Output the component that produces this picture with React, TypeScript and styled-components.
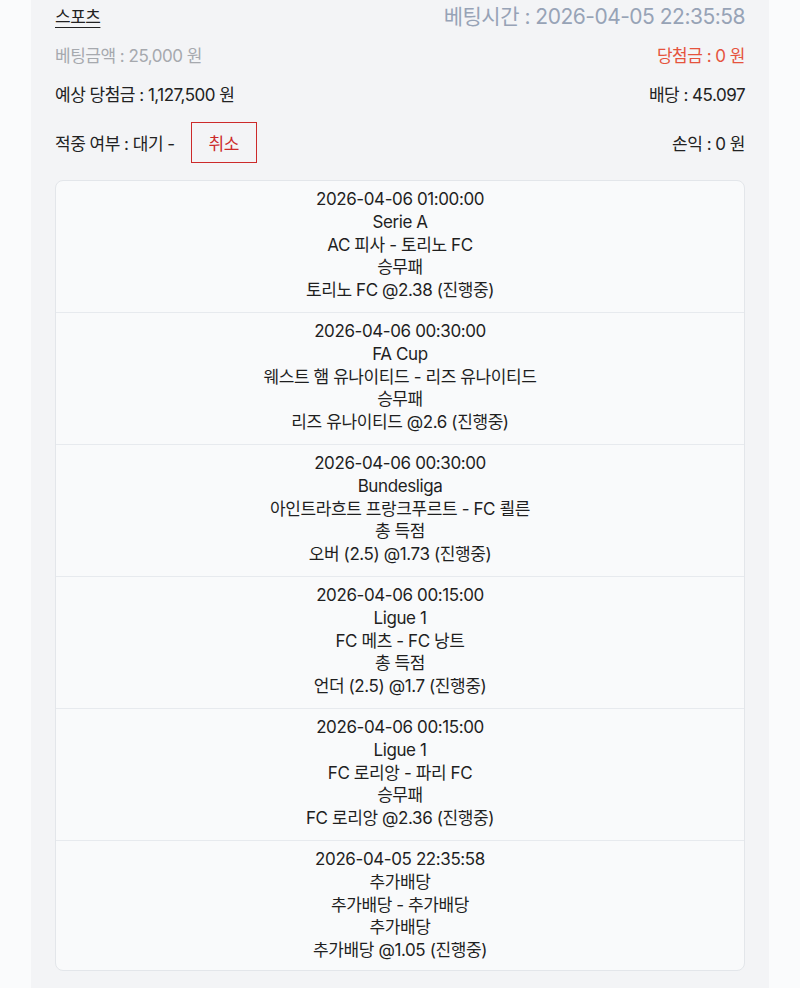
import React from "react";
import styled, { createGlobalStyle } from "styled-components";

const GlobalStyle = createGlobalStyle`
  html, body {
    margin: 0;
    padding: 0;
    background: #fafbfc;
  }
  body {
    font-family: Inter, "Noto Sans CJK KR", sans-serif;
    color: #222;
  }
`;

const Panel = styled.section`
  width: 738px;
  margin: 0 auto;
  min-height: 988px;
  box-sizing: border-box;
  background: #f3f4f6;
  padding: 0 24px 18px;
`;

const Row = styled.div<{ $h?: number; $top?: number }>`
  display: flex;
  align-items: center;
  justify-content: space-between;
  box-sizing: border-box;
  height: ${(p) => p.$h ?? 40}px;
  padding-top: ${(p) => p.$top ?? 0}px;
`;

const Text = styled.span<{ $color?: string; $size?: number }>`
  font-size: ${(p) => p.$size ?? 17}px;
  color: ${(p) => p.$color ?? "#222"};
  letter-spacing: -0.5px;
  white-space: nowrap;
`;

const Category = styled(Text)`
  text-decoration: underline;
  text-underline-offset: 4px;
  text-decoration-thickness: 1px;
`;

const Left = styled.div`
  display: flex;
  align-items: center;
  gap: 16px;
`;

const CancelButton = styled.button`
  width: 66px;
  height: 41px;
  border: 1px solid #cc2a2a;
  background: transparent;
  color: #cc2a2a;
  font-family: inherit;
  font-size: 17px;
  letter-spacing: -0.5px;
  cursor: pointer;
`;

const Card = styled.div`
  margin-top: 8px;
  background: #f9fafb;
  border: 1px solid #e3e6ea;
  border-radius: 8px;
  overflow: hidden;
`;

const Item = styled.div`
  display: flex;
  flex-direction: column;
  align-items: center;
  height: 132px;
  box-sizing: border-box;
  padding-top: 7px;
  border-top: 1px solid #e7eaee;
  &:first-child {
    border-top: none;
    height: 131px;
  }
  &:last-child {
    height: 130px;
  }
`;

const Line = styled.div`
  font-size: 17px;
  line-height: 22.75px;
  letter-spacing: -0.4px;
  color: #1f1f1f;
`;

const bets = [
  ["2026-04-06 01:00:00", "Serie A", "AC 피사 - 토리노 FC", "승무패", "토리노 FC @2.38 (진행중)"],
  ["2026-04-06 00:30:00", "FA Cup", "웨스트 햄 유나이티드 - 리즈 유나이티드", "승무패", "리즈 유나이티드 @2.6 (진행중)"],
  ["2026-04-06 00:30:00", "Bundesliga", "아인트라흐트 프랑크푸르트 - FC 쾰른", "총 득점", "오버 (2.5) @1.73 (진행중)"],
  ["2026-04-06 00:15:00", "Ligue 1", "FC 메츠 - FC 낭트", "총 득점", "언더 (2.5) @1.7 (진행중)"],
  ["2026-04-06 00:15:00", "Ligue 1", "FC 로리앙 - 파리 FC", "승무패", "FC 로리앙 @2.36 (진행중)"],
  ["2026-04-05 22:35:58", "추가배당", "추가배당 - 추가배당", "추가배당", "추가배당 @1.05 (진행중)"],
];

export default function App() {
  return (
    <>
      <GlobalStyle />
      <Panel>
        <Row $h={30}>
          <Category>스포츠</Category>
          <Text $size={21} $color="#97a3b6">
            베팅시간 : 2026-04-05 22:35:58
          </Text>
        </Row>
        <Row $h={49}>
          <Text $color="#a6a9ae">베팅금액 : 25,000 원</Text>
          <Text $color="#e5533d">당첨금 : 0 원</Text>
        </Row>
        <Row $h={29}>
          <Text>예상 당첨금 : 1,127,500 원</Text>
          <Text>배당 : 45.097</Text>
        </Row>
        <Row $h={64} $top={4}>
          <Left>
            <Text>적중 여부 : 대기 -</Text>
            <CancelButton>취소</CancelButton>
          </Left>
          <Text>손익 : 0 원</Text>
        </Row>
        <Card>
          {bets.map((b, i) => (
            <Item key={i}>
              {b.map((l, j) => (
                <Line key={j}>{l}</Line>
              ))}
            </Item>
          ))}
        </Card>
      </Panel>
    </>
  );
}
